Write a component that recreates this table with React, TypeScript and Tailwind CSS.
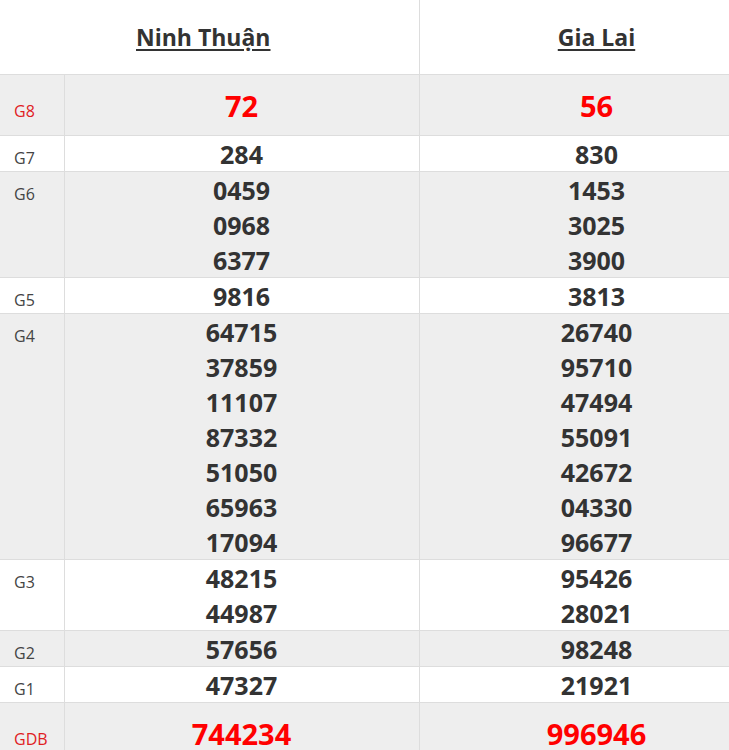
const provinces = ["Ninh Thuận", "Gia Lai"];

type Prize = { label: string; big?: boolean; results: string[][] };

const prizes: Prize[] = [
  { label: "G8", big: true, results: [["72"], ["56"]] },
  { label: "G7", results: [["284"], ["830"]] },
  { label: "G6", results: [["0459", "0968", "6377"], ["1453", "3025", "3900"]] },
  { label: "G5", results: [["9816"], ["3813"]] },
  {
    label: "G4",
    results: [
      ["64715", "37859", "11107", "87332", "51050", "65963", "17094"],
      ["26740", "95710", "47494", "55091", "42672", "04330", "96677"],
    ],
  },
  { label: "G3", results: [["48215", "44987"], ["95426", "28021"]] },
  { label: "G2", results: [["57656"], ["98248"]] },
  { label: "G1", results: [["47327"], ["21921"]] },
  { label: "GDB", big: true, results: [["744234"], ["996946"]] },
];

export default function App() {
  return (
    <div className="w-[729px] overflow-hidden bg-white font-['Open_Sans',sans-serif] text-[#333]">
      <table className="w-[774px] table-fixed border-collapse">
        <colgroup>
          <col className="w-[64px]" />
          <col className="w-[355px]" />
          <col className="w-[355px]" />
        </colgroup>
        <thead>
          <tr>
            {/* la première colonne d'en-tête fusionne avec la colonne de libellés */}
            <th colSpan={2} className="h-[74px] border-b border-r border-[#ddd] pr-[12px] text-center align-middle">
              <span className="text-[23px] font-bold underline underline-offset-[3px]">{provinces[0]}</span>
            </th>
            <th className="h-[74px] border-b border-r border-[#ddd] text-center align-middle">
              <span className="text-[23px] font-bold underline underline-offset-[3px]">{provinces[1]}</span>
            </th>
          </tr>
        </thead>
        <tbody>
          {prizes.map((prize, i) => {
            const red = prize.big;
            const bg = i % 2 === 0 ? "bg-[#eeeeee]" : "bg-white";
            return (
              <tr key={prize.label} className={bg}>
                <td
                  className={`border-b border-r border-[#ddd] pl-[14px] align-baseline text-[16px] ${
                    red ? "text-[#e0201f]" : "text-[#444]"
                  }`}
                >
                  <span className="relative top-px">{prize.label}</span>
                </td>
                {prize.results.map((list, j) => (
                  <td key={j} className="border-b border-r border-[#ddd] p-0 text-center align-baseline font-bold">
                    {list.map((n) => (
                      <div
                        key={n}
                        className={
                          red
                            ? "relative top-px text-[29px] leading-[60px] text-[#ff0000]"
                            : "relative top-px text-[25px] leading-[35px] text-[#333]"
                        }
                      >
                        {n}
                      </div>
                    ))}
                  </td>
                ))}
              </tr>
            );
          })}
        </tbody>
      </table>
    </div>
  );
}
